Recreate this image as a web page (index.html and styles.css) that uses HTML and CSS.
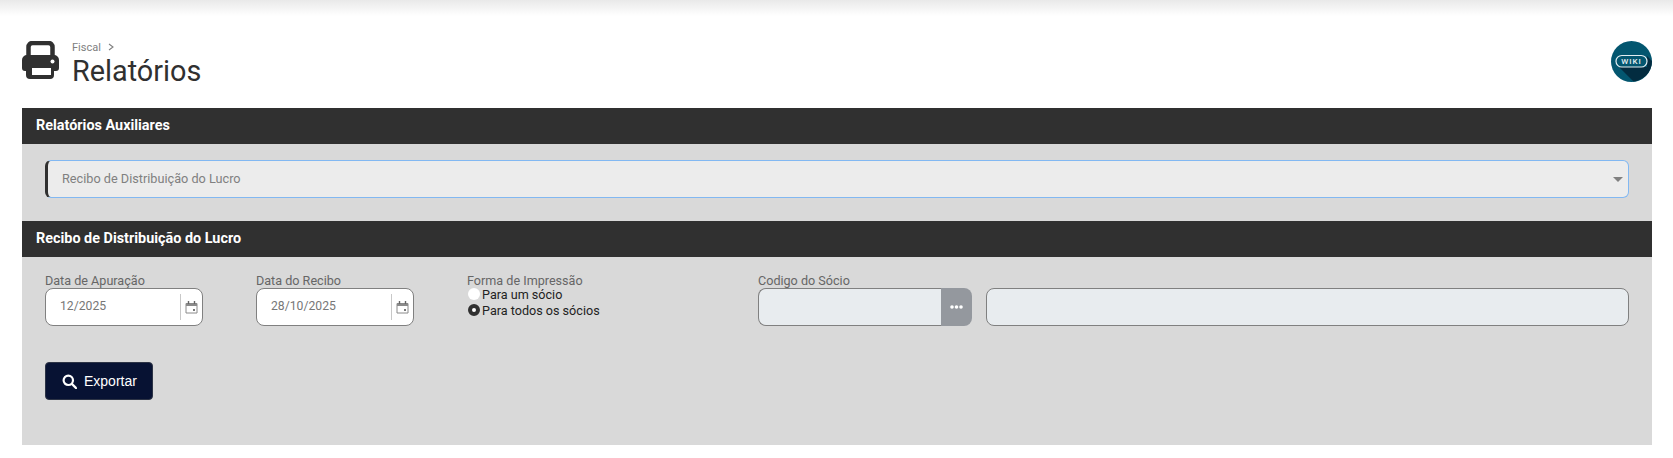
FILE: index.html
```html
<!DOCTYPE html>
<html lang="pt-BR">
<head>
  <meta charset="UTF-8" />
  <title>Relatórios</title>
  <link rel="stylesheet" href="styles.css">
</head>
<body>
  <div class="topbar"></div>

  <div class="page-head">
    <svg class="page-icon" width="37" height="38" viewBox="0 0 37 38">
      <path d="M6.500 16V6a4 4 0 0 1 4-4h16a4 4 0 0 1 4 4v10" fill="none" stroke="#303030" stroke-width="4.500"/>
      <path d="M5 14h27a5 5 0 0 1 5 5v8a3 3 0 0 1-3 3h-2v4a4 4 0 0 1-4 4H8a4 4 0 0 1-4-4v-4H3a3 3 0 0 1-3-3v-8a5 5 0 0 1 5-5z" fill="#303030"/>
      <rect x="10" y="27" width="19" height="7" fill="#fff"/>
      <circle cx="30.500" cy="20.500" r="2" fill="#fff"/>
    </svg>
    <div class="page-title">
      <div class="crumb">Fiscal
        <svg class="crumb-sep" width="6" height="8" viewBox="0 0 6 8"><path d="M1 1l4 3-4 3" fill="none" stroke="#808080" stroke-width="1.100"/></svg>
      </div>
      <h1>Relatórios</h1>
    </div>
    <div class="wiki">
      <svg width="41" height="41" viewBox="0 0 41 41">
        <circle cx="20.500" cy="20.500" r="20.500" fill="#03566f"/>
        <path d="M8 26L22.500 40.400A20.500 20.500 0 0 0 41 20L36 15V26z" fill="#032c40"/>
        <rect x="5" y="14.500" width="31" height="11.500" rx="5.750" fill="none" stroke="#e3eef2" stroke-width="1.200"/>
        <text x="20.500" y="23.300" text-anchor="middle">WIKI</text>
      </svg>
    </div>
  </div>

  <div class="panel">
    <div class="panel-title">Relatórios Auxiliares</div>
    <div class="panel-body select-row">
      <div class="select">
        <span>Recibo de Distribuição do Lucro</span>
        <span class="caret"></span>
      </div>
    </div>

    <div class="panel-title">Recibo de Distribuição do Lucro</div>
    <div class="panel-body form-body">
      <div class="fields">
        <div class="field date-field">
          <label>Data de Apuração</label>
          <div class="date-input">
            <span class="date-value">12/2025</span>
            <span class="date-btn">
              <svg width="13" height="14" viewBox="0 0 13 14"><path d="M1 3.500h11v9.500H1z" fill="#fff" stroke="#8a8a8a"/><path d="M1 3h11v3H1z" fill="#8a8a8a"/><path d="M3.500 1v3M9.500 1v3" stroke="#666" stroke-width="1.400"/><rect x="8" y="9" width="2" height="2" fill="#777"/></svg>
            </span>
          </div>
        </div>
        <div class="field date-field second">
          <label>Data do Recibo</label>
          <div class="date-input">
            <span class="date-value">28/10/2025</span>
            <span class="date-btn">
              <svg width="13" height="14" viewBox="0 0 13 14"><path d="M1 3.500h11v9.500H1z" fill="#fff" stroke="#8a8a8a"/><path d="M1 3h11v3H1z" fill="#8a8a8a"/><path d="M3.500 1v3M9.500 1v3" stroke="#666" stroke-width="1.400"/><rect x="8" y="9" width="2" height="2" fill="#777"/></svg>
            </span>
          </div>
        </div>
        <div class="field print-field">
          <label>Forma de Impressão</label>
          <div class="radio"><span class="dot"></span>Para um sócio</div>
          <div class="radio"><span class="dot checked"></span>Para todos os sócios</div>
        </div>
        <div class="field socio-field">
          <label>Codigo do Sócio</label>
          <div class="socio-inputs">
            <div class="lookup">
              <span class="lookup-input"></span>
              <span class="lookup-btn">
                <svg width="13" height="4" viewBox="0 0 13 4"><circle cx="2" cy="2" r="1.800" fill="#fff"/><circle cx="6.500" cy="2" r="1.800" fill="#fff"/><circle cx="11" cy="2" r="1.800" fill="#fff"/></svg>
              </span>
            </div>
            <div class="socio-name"></div>
          </div>
        </div>
      </div>

      <button class="export">
        <svg width="15" height="15" viewBox="0 0 15 15"><circle cx="6.300" cy="6.300" r="4.700" fill="none" stroke="#fff" stroke-width="2.200"/><path d="M10 10l4 4" stroke="#fff" stroke-width="2.400" stroke-linecap="round"/></svg>
        Exportar
      </button>
    </div>
  </div>
</body>
</html>
```

FILE: styles.css
```css
* {
  box-sizing: border-box;
}
body {
  margin: 0;
  background: #fff;
  font-family: Roboto, "Liberation Sans", sans-serif;
  color: #303030;
}
.topbar {
  height: 16px;
  background: linear-gradient(#e9e9e9, #fff);
}
.page-head {
  display: flex;
  align-items: flex-start;
  height: 92px;
  padding: 25px 21px 0 22px;
}
.page-title {
  margin-left: 13px;
}
.crumb {
  font-size: 11px;
  line-height: 13px;
  color: #808080;
}
.crumb-sep {
  margin-left: 4px;
}
h1 {
  margin: 0;
  font-size: 28.800px;
  font-weight: 400;
  line-height: 35px;
  color: #303030;
}
.wiki {
  margin-left: auto;
}
.wiki svg {
  display: block;
}
.wiki text {
  font-family: Roboto, sans-serif;
  font-size: 8px;
  font-weight: 500;
  letter-spacing: 1px;
  fill: #e3eef2;
}
.panel {
  margin: 0 21px 0 22px;
  background: #d9d9d9;
}
.panel-title {
  height: 36px;
  padding-left: 14px;
  background: #303030;
  color: #fff;
  font-size: 14.400px;
  font-weight: 700;
  line-height: 35px;
}
.select-row {
  padding: 16px 23px 23px;
}
.select {
  display: flex;
  align-items: center;
  justify-content: space-between;
  height: 38px;
  padding: 0 5px 2px 14px;
  background: #ececec;
  border: 1px solid #82b8f2;
  border-left: 3px solid #303030;
  border-radius: 6px;
  font-size: 12.700px;
  color: #808080;
}
.form-body {
  height: 188px;
  padding: 16px 23px 0;
}
.caret {
  width: 0;
  height: 0;
  margin-top: 2px;
  border-left: 5px solid transparent;
  border-right: 5px solid transparent;
  border-top: 5px solid #808080;
}
.fields {
  display: flex;
}
.field label {
  display: block;
  margin-bottom: -1px;
  font-size: 12.600px;
  line-height: 16px;
  color: #666;
}
.date-field {
  width: 158px;
}
.date-field.second {
  margin-left: 53px;
}
.date-input {
  display: flex;
  align-items: center;
  height: 38px;
  background: #fff;
  border: 1px solid #808080;
  border-radius: 8px;
}
.date-value {
  flex: 1;
  padding: 0 0 3px 14px;
  font-size: 12.200px;
  color: #777;
}
.date-btn {
  display: flex;
  align-items: center;
  justify-content: center;
  width: 22px;
  height: 26px;
  border-left: 1px solid #c8c8c8;
}
.print-field {
  width: 292px;
  margin-left: 52px;
}
.print-field label {
  margin-bottom: -3px;
  margin-left: 1px;
}
.radio {
  display: flex;
  align-items: center;
  height: 16px;
  font-size: 12.600px;
  color: #222;
}
.dot {
  width: 12px;
  height: 12px;
  margin: 0 2px 0 2px;
  background: #fff;
  border-radius: 50%;
}
.dot.checked {
  border: 4px solid #303030;
}
.socio-field {
  flex: 1;
}
.socio-inputs {
  display: flex;
  gap: 14px;
}
.lookup {
  display: flex;
  width: 214px;
  height: 38px;
}
.lookup-input {
  flex: 1;
  background: #e8ecef;
  border: 1px solid #808080;
  border-right: none;
  border-radius: 8px 0 0 8px;
}
.lookup-btn {
  display: flex;
  align-items: center;
  justify-content: center;
  width: 31px;
  background: #94989e;
  border-radius: 0 8px 8px 0;
}
.socio-name {
  flex: 1;
  height: 38px;
  background: #e8ecef;
  border: 1px solid #808080;
  border-radius: 8px;
}
.export {
  display: flex;
  align-items: center;
  gap: 7px;
  width: 108px;
  height: 38px;
  margin-top: 36px;
  padding: 0 0 0 16px;
  background: #071233;
  border: 1px solid #2c3345;
  border-radius: 4px;
  color: #fff;
  font-family: "Liberation Sans", sans-serif;
  font-size: 14px;
}
```
